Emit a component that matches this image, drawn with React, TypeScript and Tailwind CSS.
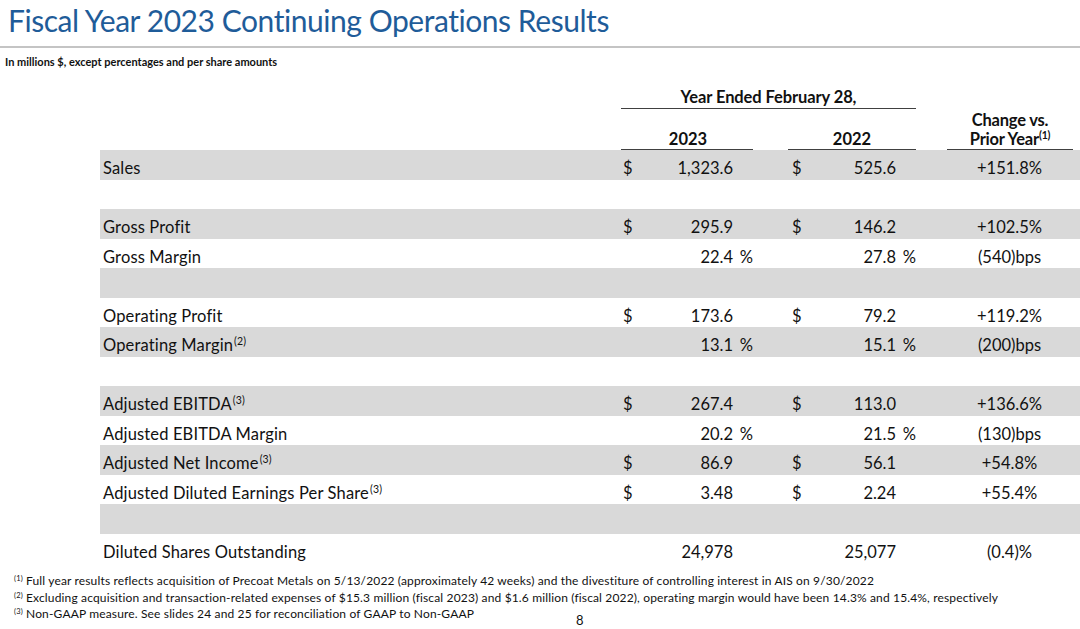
import React from 'react';

type Row = {
    label?: string;
    sup?: string;
    a?: string;
    b?: string;
    c?: string;
    dollar?: boolean;
    pct?: boolean;
};

const rows: Row[] = [
    {label: 'Sales', a: '1,323.6', b: '525.6', c: '+151.8%', dollar: true},
    {},
    {label: 'Gross Profit', a: '295.9', b: '146.2', c: '+102.5%', dollar: true},
    {label: 'Gross Margin', a: '22.4', b: '27.8', c: '(540)bps', pct: true},
    {},
    {label: 'Operating Profit', a: '173.6', b: '79.2', c: '+119.2%', dollar: true},
    {label: 'Operating Margin', sup: '(2)', a: '13.1', b: '15.1', c: '(200)bps', pct: true},
    {},
    {label: 'Adjusted EBITDA', sup: '(3)', a: '267.4', b: '113.0', c: '+136.6%', dollar: true},
    {label: 'Adjusted EBITDA Margin', a: '20.2', b: '21.5', c: '(130)bps', pct: true},
    {label: 'Adjusted Net Income', sup: '(3)', a: '86.9', b: '56.1', c: '+54.8%', dollar: true},
    {label: 'Adjusted Diluted Earnings Per Share', sup: '(3)', a: '3.48', b: '2.24', c: '+55.4%', dollar: true},
    {},
    {label: 'Diluted Shares Outstanding', a: '24,978', b: '25,077', c: '(0.4)%'},
];

const cols = 'grid grid-cols-[521px_132px_35px_128px_31px_126px]';

const Money: React.FC<{value?: string; dollar?: boolean; pct?: boolean; pl: string}> = ({value, dollar, pct, pl}) => (
    <div className={`flex items-center justify-between ${pl}`}>
        <span>{dollar ? '$' : ''}</span>
        <span className="flex">
            <span>{value}</span>
            <span className="w-[20px] text-right">{pct ? '%' : ''}</span>
        </span>
    </div>
);

const App: React.FC = () => {
    return (
        <div className="w-[1080px] h-[629px] bg-white overflow-hidden text-[#111]" style={{fontFamily: 'Lato, "Noto Sans", sans-serif'}}>
            <h1 className="pl-[8px] pt-[1px] h-[46px] text-[30px] leading-[38px] text-[#1f5c99] tracking-[-0.45px]">
                Fiscal Year 2023 Continuing Operations Results
            </h1>
            <div className="h-[2px] bg-[#c4c4c4]" />
            <p className="pl-[5px] pt-[8px] text-[11px] leading-[12px] font-bold tracking-[0px]">
                In millions $, except percentages and per share amounts
            </p>

            <div className="pl-[100px] mt-[16px] text-[16.5px]">
                <div className={`${cols} font-bold`}>
                    <div />
                    <div className="col-span-3 flex flex-col">
                        <div className="h-[25px] leading-[26px] text-center border-b-[1.5px] border-[#404040] tracking-[-0.1px]">
                            Year Ended February 28,
                        </div>
                    </div>
                    <div className="col-span-2" />
                </div>
                <div className={`${cols} font-bold h-[41px]`}>
                    <div />
                    <div className="flex items-end justify-center border-b-[1.5px] border-[#404040] leading-[19px] pl-[2px]">2023</div>
                    <div />
                    <div className="flex items-end justify-center border-b-[1.5px] border-[#404040] leading-[19px]">2022</div>
                    <div />
                    <div className="flex flex-col items-center justify-end border-b-[1.5px] border-[#404040] leading-[19px] -mt-[22px] tracking-[-0.2px]">
                        <span>Change vs.</span>
                        <span>
                            Prior Year<sup className="text-[10.5px] font-bold -top-[6px]">(1)</sup>
                        </span>
                    </div>
                </div>

                {rows.map((r, i) => (
                    <div
                        key={i}
                        className={`${cols} h-[29.5px] items-center pt-[6px] ${i % 2 === 0 ? 'bg-[#d9d9d9]' : 'bg-white'}`}
                    >
                        <div className="pl-[3px] tracking-[0.15px]">
                            {r.label}
                            {r.sup && <sup className="text-[10.5px] -top-[6px] ml-[1px]">{r.sup}</sup>}
                        </div>
                        <Money value={r.a} dollar={r.dollar} pct={r.pct} pl="pl-[2px]" />
                        <div />
                        <Money value={r.b} dollar={r.dollar} pct={r.pct} pl="pl-[4px]" />
                        <div />
                        <div className="text-center pr-[1px]">{r.c}</div>
                    </div>
                ))}
            </div>

            <div className="pl-[14px] mt-[10px] text-[12px] leading-[16.5px] tracking-[0.15px] text-[#111]">
                <p>
                    <sup className="text-[7.5px] -top-[4px]">(1)</sup> Full year results reflects acquisition of Precoat Metals on 5/13/2022 (approximately 42 weeks) and the divestiture of controlling interest in AIS on 9/30/2022
                </p>
                <p>
                    <sup className="text-[7.5px] -top-[4px]">(2)</sup> Excluding acquisition and transaction-related expenses of $15.3 million (fiscal 2023) and $1.6 million (fiscal 2022), operating margin would have been 14.3% and 15.4%, respectively
                </p>
                <div className="flex">
                    <p className="w-[562px]">
                        <sup className="text-[7.5px] -top-[4px]">(3)</sup> Non-GAAP measure. See slides 24 and 25 for reconciliation of GAAP to Non-GAAP
                    </p>
                    <span className="text-[13px] leading-[16px] mt-[6px]">8</span>
                </div>
            </div>
        </div>
    );
};

export default App;
